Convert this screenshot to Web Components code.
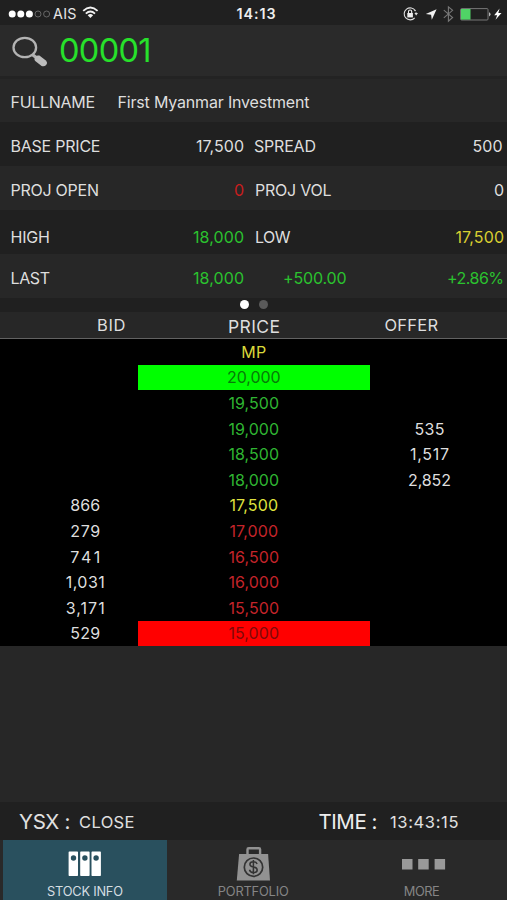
<!DOCTYPE html>
<html lang="en">
<head>
<meta charset="utf-8">
<title>Stock Info</title>
<style>
html,body{margin:0;padding:0;background:#272727}
body{font-family:Inter,"Liberation Sans",sans-serif;color:#dedede;width:507px;height:900px;overflow:hidden}
</style>
</head>
<body>
<stock-app></stock-app>
<script>
const define = (name, html, init) => {
  const tpl = document.createElement('template');
  tpl.innerHTML = html;
  customElements.define(name, class extends HTMLElement {
    connectedCallback() {
      if (this.shadowRoot) return;
      this.attachShadow({mode: 'open'}).append(tpl.content.cloneNode(true));
      if (init) init(this, this.shadowRoot);
    }
  });
};

/* One line of text, tracked so that it fills the width given in "w". */
define('fit-text', `<style>:host{display:inline-block;white-space:pre;line-height:20px;flex:none}span{display:inline-block}</style><span><slot></slot></span>`, (el, root) => {
  const span = root.querySelector('span');
  const size = el.getAttribute('size');
  if (size) el.style.fontSize = size + 'px';
  const w = parseFloat(el.getAttribute('w'));
  if (!w || !el.textContent) return;
  const gap = (w - span.getBoundingClientRect().width) / (el.textContent.length - 1);
  span.style.letterSpacing = gap.toFixed(3) + 'px';
  span.style.marginRight = (-gap).toFixed(3) + 'px';
});

define('status-bar', `<style>
:host{display:grid;grid-template-columns:1fr auto 1fr;align-items:center;height:25px;box-sizing:border-box;padding-top:2px;background:#202020;color:#e6e6e6}
div{display:flex;align-items:center}
.l{padding-left:8px}.r{justify-content:flex-end}
.c{font-weight:600;color:#eee;padding-left:5px}
svg{display:block;flex:none}
</style>
<div class="l">
<svg width="43" height="10" viewBox="0 0 43 10"><g fill="#fff"><circle cx="4.2" cy="5" r="3.5"/><circle cx="12.8" cy="5" r="3.5"/><circle cx="21.4" cy="5" r="3.5"/></g><g fill="none" stroke="#777" stroke-width=".8"><circle cx="30" cy="5" r="3"/><circle cx="38.6" cy="5" r="3"/></g></svg>
<fit-text size="14.3" w="23.5" style="margin-left:2px">AIS</fit-text>
<svg style="margin-left:5px;margin-top:-3px" width="17" height="13" viewBox="0 0 17 13"><g fill="none" stroke="#f2f2f2" stroke-width="1.8"><path d="M1.2 4.9Q8.4-1.9 15.6 4.9"/><path d="M3.8 7.6Q8.4 3.4 13 7.6"/></g><path d="M5.7 9.2Q8.4 6.9 11.1 9.2L8.4 12.1Z" fill="#f2f2f2"/></svg>
</div>
<div class="c"><fit-text size="14.3" w="39">14:13</fit-text></div>
<div class="r">
<svg width="105" height="18" viewBox="402 4 105 18">
<g fill="none" stroke="#ddd" stroke-width="1.1"><path d="M415.3 9.7A6 6 0 1 0 414.7 16.8"/><path d="M414.6 8.9A6 6 0 0 1 416 14.2" stroke-dasharray="1.5 1.3"/></g>
<path d="M414.4 12H418L416.2 14.6Z" fill="#ddd"/>
<rect x="407.3" y="12" width="5.6" height="4.4" fill="#eee"/><path d="M408.5 12v-1.4a1.6 1.6 0 0 1 3.2 0V12" fill="none" stroke="#eee" stroke-width="1.1"/>
<path d="M436.6 8.2L425.8 13.1L431.1 13.8L431.8 18.7Z" fill="#f2f2f2"/>
<path d="M443.8 9.2L452.6 16.5L448.4 20.2V5.8L452.6 9.3L443.8 16.8" fill="none" stroke="#777" stroke-width="1.1"/>
<rect x="460.6" y="7.6" width="27.4" height="11.4" rx="1" fill="none" stroke="#777"/><rect x="461" y="8" width="9.5" height="10.6" fill="#50d366"/><path d="M489 11.2a2.2 2.2 0 0 1 0 4.2Z" fill="#bbb"/>
<path d="M499.6 7.6L494.2 14.2H497.2L495.5 18.8L501.5 12.1H498.3Z" fill="#fff"/>
</svg></div>`);

define('symbol-search', `<style>
:host{display:flex;align-items:center;height:54px;box-sizing:border-box;padding:1px 0 0 12px;background:#2a2a2a;border-bottom:3px solid #232323;color:#27e12b}
svg{display:block}
</style>
<svg width="36" height="31" viewBox="0 0 36 31"><ellipse cx="12.8" cy="11.5" rx="11.3" ry="9.7" fill="none" stroke="#b3b3b3" stroke-width="2.3"/><path d="M20.6 18.7L24.2 21.6" stroke="#b3b3b3" stroke-width="3.2"/><path d="M22.6 22.4Q23.8 18.6 27.4 19.6L34.2 24.8Q36 27 34.2 29Q32 31 29.6 29.9L23.2 25Q22 23.8 22.6 22.4Z" fill="#bcbcbc"/></svg>
<slot></slot>`);

/* A band of quote fields: label, value, second label, second value. */
define('quote-row', `<style>
:host{display:grid;grid-template-columns:233.5px 10px 1fr;align-items:center;height:44px;box-sizing:border-box;padding:4px 3px 0 10.5px;background:#272727;font-size:16px}
:host([dark]){background:#202020}
:host([wide]){grid-template-columns:107px 1fr;height:43px;padding-top:3px}
:host([low]){padding-top:10px}
div{display:flex;justify-content:space-between;align-items:center}
.b{grid-column:3}
:host([wide]) .b{grid-column:2}
</style><div><slot name="a"></slot></div><div class="b"><slot name="b"></slot></div>`);

define('page-dots', `<style>
:host{display:flex;justify-content:center;align-items:center;gap:10.5px;height:14px;box-sizing:border-box;padding-left:1px;padding-bottom:1px;background:#202020}
i{width:9px;height:9px;border-radius:50%;background:#fff}i+i{background:#5a5a5a}
</style><i></i><i></i>`);

define('book-head', `<style>
:host{display:grid;grid-template-columns:137px 233px 137px;height:27px;box-sizing:border-box;background:#272727;border-bottom:1px solid #626262;align-items:center}
div{display:flex}
</style><div style="padding-left:97px"><fit-text size="16.5" w="28.5">BID</fit-text></div><div style="padding:3px 0 0 91px"><fit-text size="17.5" w="52">PRICE</fit-text></div><div style="padding-left:14.5px"><fit-text size="16.5" w="53.5">OFFER</fit-text></div>`);

define('book-row', `<style>
:host{display:grid;grid-template-columns:137.5px 232.5px 137px;height:25.6px;font-size:16px;color:#dedede}
div{display:flex;align-items:center;justify-content:center;box-sizing:border-box}
.bid{padding-left:33px}.off{padding-right:18px}
</style><div class="bid"></div><div class="price"></div><div class="off"></div>`, (el, root) => {
  const put = (sel, text, w) => { if (text) root.querySelector(sel).innerHTML = '<fit-text w="' + w + '">' + text + '</fit-text>'; };
  const wide = t => t && t.length > 3 ? (t[0] === '2' ? 43 : 39) : 30;
  const bid = el.getAttribute('bid'), off = el.getAttribute('offer'), p = el.getAttribute('price');
  const price = root.querySelector('.price');
  price.style.color = el.getAttribute('tone');
  price.style.background = el.getAttribute('fill') || '';
  put('.bid', bid, wide(bid));
  put('.price', p, p === 'MP' ? 25 : p[0] === '2' ? 53.5 : /^17/.test(p) ? 48.5 : 50.5);
  put('.off', off, wide(off));
});

define('order-book', `<style>:host{display:block;height:307px;background:#000}</style><slot></slot>`);

define('market-status', `<style>
:host{display:flex;align-items:center;height:38px;box-sizing:border-box;padding:1px 0 0 19px;background:#202020;color:#e0e0e0}
</style>
<fit-text size="20.5" w="51.5">YSX :</fit-text><fit-text size="16.5" w="55.5" style="margin-left:8.5px">CLOSE</fit-text>
<fit-text size="20.5" w="59" style="margin-left:184px;color:#eee">TIME :</fit-text><fit-text size="16.5" w="68.5" style="margin-left:12.5px">13:43:15</fit-text>`);

define('tab-item', `<style>
:host{display:flex;flex-direction:column;align-items:center;height:60px;box-sizing:border-box;color:#858585;font-size:12.8px;overflow:hidden}
:host([active]){background:#29505e;color:#d5dee2}
.icon{height:42px;display:flex}
::slotted(svg){display:block}
</style><div class="icon"><slot name="icon"></slot></div><slot></slot>`);

define('tab-bar', `<style>:host{display:grid;grid-template-columns:164px 172.5px 164.5px;padding-left:3px;height:60px;background:#292929}</style>
<tab-item active><svg slot="icon" width="40" height="42" viewBox="65 840 40 42"><path fill="#fff" d="M69.3 851.5h8a.7.7 0 0 1 .7.7v23a.7.7 0 0 1-.7.7h-8a.7.7 0 0 1-.7-.7v-23a.7.7 0 0 1 .7-.7ZM80.9 851.5h8a.7.7 0 0 1 .7.7v23a.7.7 0 0 1-.7.7h-8a.7.7 0 0 1-.7-.7v-23a.7.7 0 0 1 .7-.7ZM92.2 851.5h8a.7.7 0 0 1 .7.7v23a.7.7 0 0 1-.7.7h-8a.7.7 0 0 1-.7-.7v-23a.7.7 0 0 1 .7-.7Z"/><g fill="#29505e"><circle cx="73.5" cy="858" r="2.7"/><circle cx="84.9" cy="858" r="2.7"/><circle cx="96.1" cy="858" r="2.7"/></g></svg><fit-text w="76">STOCK INFO</fit-text></tab-item>
<tab-item><svg slot="icon" width="40" height="42" viewBox="233.5 840 40 42"><path d="M248 855v-5.6q0-1.2 1.2-1.2h10.2q1.2 0 1.2 1.2v5.6" fill="none" stroke="#929292" stroke-width="2.4"/><path d="M239.6 854h29l1.9 26.5H237.3Z" fill="#929292"/><circle cx="254" cy="867.2" r="9.2" fill="none" stroke="#333" stroke-width="1.7"/><path d="M257.6 864.1Q256.8 861.8 253.9 861.8Q250.4 861.8 250.4 864.3Q250.4 866.4 253.9 867Q257.7 867.7 257.7 870Q257.7 872.6 253.9 872.6Q250.7 872.6 250 869.8M253.9 860V874.3" fill="none" stroke="#333" stroke-width="1.5"/></svg><fit-text w="71">PORTFOLIO</fit-text></tab-item>
<tab-item><svg slot="icon" width="50" height="42" viewBox="397 840 50 42"><g fill="#999"><rect x="402" y="859" width="10.5" height="10.5"/><rect x="418.2" y="859" width="10.5" height="10.5"/><rect x="434.6" y="859" width="10.5" height="10.5"/></g></svg><fit-text w="36">MORE</fit-text></tab-item>`);

define('stock-app', `<style>
:host{display:flex;flex-direction:column;width:507px;height:900px;background:#272727}
.g{color:#2bc22f}.r{color:#c81e1e}.y{color:#d9cf31}
main{flex:1}
</style>
<status-bar></status-bar>
<symbol-search><fit-text size="32.5" w="92.5" style="margin-left:11px">00001</fit-text></symbol-search>
<quote-row wide><fit-text slot="a" w="84.5">FULLNAME</fit-text><fit-text slot="b" w="192">First Myanmar Investment</fit-text></quote-row>
<quote-row dark><fit-text slot="a" w="90">BASE PRICE</fit-text><fit-text slot="a" w="48">17,500</fit-text><fit-text slot="b" w="62">SPREAD</fit-text><fit-text slot="b" w="30" style="margin-right:1.5px">500</fit-text></quote-row>
<quote-row><fit-text slot="a" w="88.5">PROJ OPEN</fit-text><fit-text slot="a" class="r">0</fit-text><fit-text slot="b" w="76.5" style="margin-left:1px">PROJ VOL</fit-text><fit-text slot="b">0</fit-text></quote-row>
<quote-row dark low><fit-text slot="a" w="39.5">HIGH</fit-text><fit-text slot="a" class="g" w="51">18,000</fit-text><fit-text slot="b" w="35.5" style="margin-left:1px">LOW</fit-text><fit-text slot="b" class="y" w="48.5">17,500</fit-text></quote-row>
<quote-row><fit-text slot="a" w="39.5">LAST</fit-text><fit-text slot="a" class="g" w="51">18,000</fit-text><fit-text slot="b" class="g" w="63.5" style="margin-left:29px">+500.00</fit-text><fit-text slot="b" class="g" w="57">+2.86%</fit-text></quote-row>
<page-dots></page-dots>
<book-head></book-head>
<order-book>
<book-row price="MP" tone="#d9d93a"></book-row>
<book-row price="20,000" tone="#087a08" fill="#00ff00"></book-row>
<book-row price="19,500" tone="#2fb532"></book-row>
<book-row price="19,000" tone="#2fb532" offer="535"></book-row>
<book-row price="18,500" tone="#2fb532" offer="1,517"></book-row>
<book-row price="18,000" tone="#2fb532" offer="2,852"></book-row>
<book-row price="17,500" tone="#dfe03e" bid="866"></book-row>
<book-row price="17,000" tone="#c4242a" bid="279"></book-row>
<book-row price="16,500" tone="#c4242a" bid="741"></book-row>
<book-row price="16,000" tone="#c4242a" bid="1,031"></book-row>
<book-row price="15,500" tone="#c4242a" bid="3,171"></book-row>
<book-row price="15,000" tone="#800808" fill="#ff0000" bid="529"></book-row>
</order-book>
<main></main>
<market-status></market-status>
<tab-bar></tab-bar>`);
</script>
</body>
</html>
